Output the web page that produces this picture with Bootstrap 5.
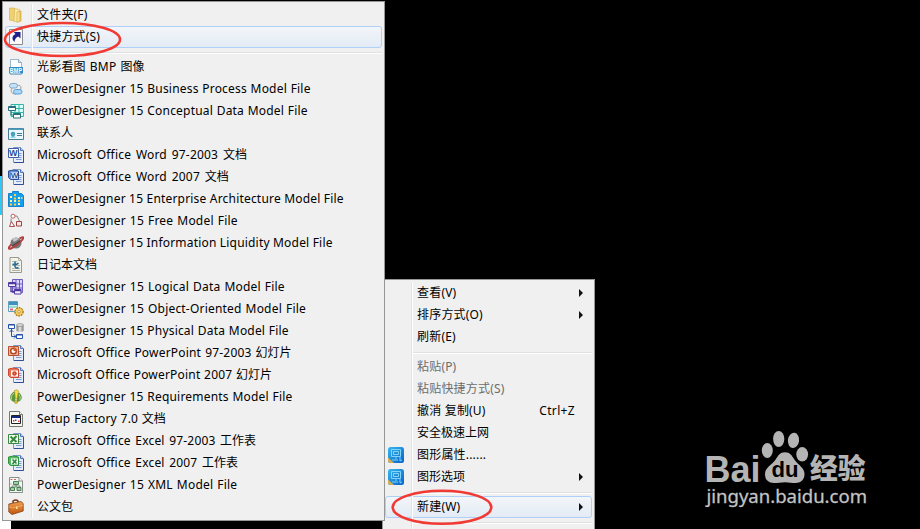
<!DOCTYPE html>
<html lang="zh-CN">
<head>
<meta charset="utf-8">
<meta name="viewport" content="width=device-width, initial-scale=1">
<title>新建 - 快捷方式</title>
<link href="https://cdn.jsdelivr.net/npm/bootstrap@5.3.0/dist/css/bootstrap.min.css" rel="stylesheet">
<style>
body{background:#000;font-family:"Noto Sans","Noto Sans CJK SC",sans-serif;font-size:12px;line-height:22px;color:#000}
.desk{width:920px;height:529px}
.edge{left:0;top:176px;width:11px;height:353px;background:linear-gradient(#2cc8fa 39px,#fff 39px)}
.ctx{background:#f0f0f0;border:1px solid #979797;padding:2px}
.ctx-new{left:2px;top:1px;width:383px;height:520px;z-index:2}
.ctx-main{left:382px;top:279px;width:213px;height:262px;z-index:1}
.ctx::before{content:"";position:absolute;left:28px;top:2px;bottom:2px;width:2px;background:linear-gradient(90deg,#e2e3e3 50%,#fff 50%)}
.entry{height:22px;padding-left:3px;border:1px solid transparent;border-radius:3px;line-height:20px;letter-spacing:.19px}
.entry svg{width:16px;height:16px;flex:none;margin-left:-1px}
.entry .ico{width:28px}
.entry .cjk{letter-spacing:0}
.ws-a{word-spacing:.4px}
.ws-b{word-spacing:.75px}
.ws-c{word-spacing:1.2px}
.ws-d{word-spacing:1.5px}
.entry.hot{border-color:#aecff7;background:linear-gradient(rgba(243,246,251,.85),rgba(225,234,246,.85))}
.entry.off{color:#6d6d6d}
.rule{height:8px;padding:4px 0 2px 28px}
.rule::before{content:"";display:block;height:2px;background:linear-gradient(#e0e0e0 50%,#fff 50%)}
.tri{width:0;height:0;border:4px solid transparent;border-left-color:#111;border-right:0;margin-right:8px}
.keys{margin-right:16px;letter-spacing:.35px}
.rings{left:0;top:0;z-index:3}
.brand{left:700px;top:425px}
</style>
</head>
<body>
<svg width="0" height="0" class="position-absolute">
<defs>
<linearGradient id="gFold" x2="1"><stop stop-color="#fff0a8"/><stop offset="1" stop-color="#e2b84c"/></linearGradient>
<linearGradient id="gBag" y2="1" x2="0"><stop stop-color="#f0a050"/><stop offset="1" stop-color="#c0560f"/></linearGradient>
<linearGradient id="gApp" x2="1" y2="1"><stop stop-color="#38b8f0"/><stop offset="1" stop-color="#0860c8"/></linearGradient>
<linearGradient id="gDb" x2="1"><stop stop-color="#777"/><stop offset=".5" stop-color="#e8e8e8"/><stop offset="1" stop-color="#777"/></linearGradient>
<symbol id="folder" viewBox="0 0 16 16"><path d="M1.500 1h5v13l-5-1z" fill="#f0d070" stroke="#d0ab48" stroke-width=".6"/><path d="M6.500 1.500l5 1v12H6z" fill="#fbe7a0" stroke="#d5b453" stroke-width=".6"/><path d="M9 5l4-1v10l-4 1.500z" fill="url(#gFold)" stroke="#cfa33e" stroke-width=".6"/></symbol>
<symbol id="link" viewBox="0 0 16 16"><path d="M1.500.5h13v15h-13z" fill="#fafafa" stroke="#8b8b8b"/><path d="M12.500 3v6.500L10.300 7.500C8 8.300 6.800 10 6.500 13 3.400 10 4 6.500 7.500 5L5.700 3z" fill="#20208c"/></symbol>
<symbol id="bmp" viewBox="0 0 16 16"><path d="M2.500.5h8l3 3v12h-11z" fill="#fff" stroke="#9bb7cc"/><path d="M10.500.5v3h3" fill="#cfe3f2" stroke="#6a9dc0" stroke-width=".8"/><path d="M1 8h14v6.500H1z" fill="#2f8cc6"/><text x="1.700" y="13.500" font-size="6.500" font-weight="700" fill="#fff" font-family="Liberation Sans,sans-serif" textLength="12.500" lengthAdjust="spacingAndGlyphs">BMP</text></symbol>
<symbol id="bpm" viewBox="0 0 16 16"><path d="M9 4.500c5-1 5 4 2 5M4 7c-2 4 0 6 4 6" fill="none" stroke="#999"/><rect x="1.500" y="2.500" width="8" height="4.500" rx="2.200" fill="#c2e3fb" stroke="#84a7c4"/><rect x="5.500" y="8.500" width="8.500" height="4.500" rx="2.200" fill="#a9d6f8" stroke="#5b9fd8"/></symbol>
<symbol id="cdm" viewBox="0 0 16 16"><path d="M3 1.500h12.500v12H3zM7 1.500v12M11 1.500v12M3 5.500h12M3 9.500h12" fill="#d6fff9" stroke="#36b5a8"/><path d="M.5 3.500h7v4h-7zM5.500 10.500h7v4.500h-7z" fill="#fff" stroke="#2c7079"/><path d="M3 8v4h3M1 4.500h6M6 11.500h6" fill="none" stroke="#2c7079"/></symbol>
<symbol id="contact" viewBox="0 0 16 16"><path d="M.5 3.500h15v11H.500z" fill="#e9f8ff" stroke="#467c9c"/><path d="M1 3.500h14v1.500H1z" fill="#4e9bc0"/><circle cx="5" cy="9" r="2.300" fill="#47a0b8"/><path d="M2 12.500q3-3 6 0z" fill="#4aafd2"/><path d="M9 8.500h5M9 10.500h5" stroke="#447b98"/></symbol>
<symbol id="page" viewBox="0 0 16 16"><path d="M5.500.5h7l3 3v12h-10z" fill="#e5edfb" stroke="#7b96c8"/><path d="M12.500.5v3h3" fill="#b8cbec" stroke="#5474b4"/><path d="M8 6.500h5.500M8 8.500h5.500M8 10.500h5.500M8 12.500h5.500" stroke="#7f9bd0"/><path d="M15.500 4v11.500H6" fill="none" stroke="#314f92"/></symbol>
<symbol id="word" viewBox="0 0 16 16"><use href="#page"/><path d="M.5 1.500h10v9H.500z" fill="#fff" stroke="#3c5fa5"/><text x="1" y="9.300" font-size="9" font-weight="700" fill="#2a4e9a" font-family="Liberation Sans,sans-serif">W</text></symbol>
<symbol id="word7" viewBox="0 0 16 16"><use href="#page"/><path d="M.5 2q5-2 10 0v8.500H2.500l-2-2z" fill="#648fdd" stroke="#2c4e94"/><path d="M3 3.500h7v6H3z" fill="#fff"/><text x="2.800" y="9.300" font-size="8" font-weight="700" fill="#2a4e9a" font-family="Liberation Sans,sans-serif">W</text></symbol>
<symbol id="eam" viewBox="0 0 16 16"><path d="M.5 2.500h4V.5h6v2h3l2 2v11H.500z" fill="#149ff0" stroke="#1680cf"/><path d="M2 5h2v2H2zm0 4h2v2H2zm4 0h2v2H6zm4-3h2v2h-2zm0 6h2v2h-2z" fill="#fff0a0"/><path d="M6 3h2v2H6zm0 3.500h2v2H6zM2 12.500h2v2H2zm4 0h2v2H6zM10 9h2v2h-2zm3-3h1.500v2H13z" fill="#ffcf3d"/></symbol>
<symbol id="free" viewBox="0 0 16 16"><path d="M3 5.500V10M7 3h2l2.500 5M3 12l4 1" fill="none" stroke="#888"/><circle cx="5" cy="3.200" r="2" fill="#fff" stroke="#b86060"/><path d="M3.500 8.500l3 5h-5z" fill="#fff" stroke="#b05050"/><path d="M8.500 8.500h5v4.500h-5z" fill="#ffe9e6" stroke="#a54040"/></symbol>
<symbol id="ilm" viewBox="0 0 16 16"><circle cx="8" cy="8" r="5.500" fill="#777"/><path d="M4 4q3-3 7 0l-5 3z" fill="#c4c4c4"/><path d="M11.500 3.500C17 .8 16.500 3 11 8S0 15.500.8 12.500L3.500 9" fill="none" stroke="#b04242" stroke-width="2"/><path d="M4 11l8-5" stroke="#3a3a3a"/></symbol>
<symbol id="journal" viewBox="0 0 16 16"><path d="M2 .5h8.500l3 3v12H2z" fill="#f4f3e8" stroke="#999b90"/><path d="M10.500.5v3h3M4 4.500h5M4 13.500h8M4 8.500h8M4 11.500h8" fill="none" stroke="#9ea298" stroke-width=".8"/><path d="M7 4.500v5q1 2.500 3.500 1M4.500 7q3 1.500 6-.8" fill="none" stroke="#286d94" stroke-width="1.600"/></symbol>
<symbol id="ldm" viewBox="0 0 16 16"><path d="M4.500.5h10v13h-10zM8 .5v13M11.500.5v13M4 5h11M4 9h11" fill="#dcd5ff" stroke="#6f5dbe"/><path d="M.5 3.500h7v4h-7zM6.500 10.500h6.500v4.500H6.500z" fill="#f3f0ff" stroke="#4f399e"/><path d="M1 4.500h6M7 11.500h6M3 8v4.500h3" fill="none" stroke="#4f399e" stroke-width="1.300"/></symbol>
<symbol id="oom" viewBox="0 0 16 16"><path d="M.5.5h9v10h-9z" fill="#fff" stroke="#5fa1b5"/><path d="M1 1h8.500v3H1z" fill="#3e91c5"/><path d="M1 4.500h8.500v2.500H1z" fill="#99dcd2"/><path d="M2 8.500h3" stroke="#e25c7a" stroke-width="2"/><circle cx="11" cy="10.800" r="4" fill="#eebc43" stroke="#a97618" stroke-width="1.500" stroke-dasharray="1.600 1"/><circle cx="11" cy="10.800" r="3.300" fill="#f5ce63"/><circle cx="11" cy="10.800" r="1.300" fill="#fff" stroke="#ad7c1c" stroke-width=".7"/></symbol>
<symbol id="pdm" viewBox="0 0 16 16"><path d="M.5 1.500h6v4h-6zM8.500 11.500h6v4h-6z" fill="#fff" stroke="#2453ac"/><path d="M1 2h5.500M9 12h5.500" stroke="#2453ac"/><path d="M3.500 6v7.500H8M1.500 9l2-2 2 2M6 11.500l2 2-2 2" fill="none" stroke="#2453ac"/><path d="M8.500 2v6q3.500 2 7 0V2z" fill="url(#gDb)"/><ellipse cx="12" cy="2" rx="3.500" ry="1.400" fill="#ddd" stroke="#777" stroke-width=".6"/></symbol>
<symbol id="ppt" viewBox="0 0 16 16"><use href="#page"/><path d="M.5 1.500h10v9H.500z" fill="#f0b59c" stroke="#b7502d"/><circle cx="5.500" cy="6" r="2.800" fill="#fff" stroke="#b44720" stroke-width="1.500"/><path d="M5.500 6V2.500A3.500 3.500 0 0 1 9 6z" fill="#d05a28"/></symbol>
<symbol id="ppt7" viewBox="0 0 16 16"><use href="#page"/><path d="M.5 2q5-2 10 0v8.500H2.500l-2-2z" fill="#e57355" stroke="#cc4a34"/><path d="M3 3.500h7v6H3z" fill="#fff"/><circle cx="6.500" cy="6.500" r="1.600" fill="#e9785c" stroke="#cf3c20" stroke-width="1.400"/></symbol>
<symbol id="req" viewBox="0 0 16 16"><path d="M7 13C1 12 .5 6 6 2.500l2 1zM9 13c6-1 6-6 2-9.500L9 5z" fill="#5b963b"/><path d="M3 11q0-5 3-7M12 11q1-3-1-6" fill="none" stroke="#b3d692"/><path d="M6.500 1.500q2.500-1.500 4 .5L9 10H7.500z" fill="#ffe044" stroke="#9c8d1d" stroke-width=".6"/><circle cx="8" cy="13" r="1.500" fill="#e7c42d" stroke="#8a801a" stroke-width=".5"/></symbol>
<symbol id="setup" viewBox="0 0 16 16"><path d="M1.500.5h10l3 3v12h-13z" fill="#f7f6ed" stroke="#777"/><path d="M11.500.5v3h3" fill="#fff" stroke="#777"/><path d="M3.500 4.500h9v8h-9z" fill="#fff" stroke="#222"/><path d="M4 5h8v2H4z" fill="#182684"/><path d="M5 9h1.500v1.500H5z" fill="#d33"/><path d="M7 8.500h1.500V10H7z" fill="#44c"/><path d="M10 9.500h1.500V11H10z" fill="#d33"/></symbol>
<symbol id="xls" viewBox="0 0 16 16"><use href="#page"/><path d="M.5 1.500h10v9H.500z" fill="#f2fff0" stroke="#3b8940"/><path d="M2.500 3.500l6 5.500M8.500 3l-6 6.500" stroke="#35883b" stroke-width="2"/></symbol>
<symbol id="xls7" viewBox="0 0 16 16"><use href="#page"/><path d="M.5 2q5-2 10 0v8.500H2.500l-2-2z" fill="#55bd62" stroke="#2e9140"/><path d="M3 3.500h7v6H3z" fill="#fff"/><path d="M4.500 4.500l4 4M8.500 4.500l-4 4.500" stroke="#2d873a" stroke-width="1.700"/></symbol>
<symbol id="xml" viewBox="0 0 16 16"><path d="M1.500.5h9.500l3.500 3.500v11.500h-13z" fill="#f3f8f3" stroke="#888e8c"/><path d="M11 .5V4h3.500" fill="#fff" stroke="#888"/><path d="M8 7v4M4 11V9h8v2" fill="none" stroke="#718a78"/><path d="M5.500 4.500h5v3h-5zM2.500 10.500h4v3h-4zM9 10.500h4v3H9z" fill="#a1d0a7" stroke="#4d8055"/><path d="M2.500 2.500h2M6 2.500h2M2.500 7h1" stroke="#c56565"/></symbol>
<symbol id="bag" viewBox="0 0 16 16"><path d="M5 4V2q3-2 5 0v2" fill="none" stroke="#713610" stroke-width="1.500"/><path d="M.8 5L13 2.500l2.200 2V12L4 15.500.8 13z" fill="url(#gBag)" stroke="#854010" stroke-width=".8"/><path d="M1 7.500l3.500 1.500L15 6.500" fill="none" stroke="#f5b468" stroke-width=".8"/><path d="M8 7.500h1.500v2.500H8z" fill="#ffe095"/></symbol>
<symbol id="gfx" viewBox="0 0 16 16"><rect width="16" height="16" rx="2.500" fill="url(#gApp)"/><path d="M3.500 2.500h9v7h-9zM5.500 4.500h5v3h-5zM8 10v2M4 13h6" fill="none" stroke="#8adcfb" stroke-width=".9"/><path d="M0 10.500L6 16H2.500Q0 16 0 13.500z" fill="#d9b04e"/><path d="M12 10v4l2-1" fill="none" stroke="#7bd8ff"/></symbol>
</defs>
</svg>

<main class="desk position-relative overflow-hidden">
<div class="edge position-absolute"></div>

<section class="ctx ctx-new position-absolute d-flex flex-column">
<div class="entry d-flex align-items-center"><span class="ico d-flex"><svg><use href="#folder"/></svg></span><span>文件夹(F)</span></div>
<div class="entry hot d-flex align-items-center"><span class="ico d-flex"><svg><use href="#link"/></svg></span><span>快捷方式(S)</span></div>
<div class="rule"></div>
<div class="entry d-flex align-items-center"><span class="ico d-flex"><svg><use href="#bmp"/></svg></span><span class="ws-b">光影看图 BMP 图像</span></div>
<div class="entry d-flex align-items-center"><span class="ico d-flex"><svg><use href="#bpm"/></svg></span><span class="ws-a">PowerDesigner 15 Business Process Model File</span></div>
<div class="entry d-flex align-items-center"><span class="ico d-flex"><svg><use href="#cdm"/></svg></span><span class="ws-a">PowerDesigner 15 Conceptual Data Model File</span></div>
<div class="entry d-flex align-items-center"><span class="ico d-flex"><svg><use href="#contact"/></svg></span><span class="cjk">联系人</span></div>
<div class="entry d-flex align-items-center"><span class="ico d-flex"><svg><use href="#word"/></svg></span><span class="ws-d">Microsoft Office Word 97-2003 <span class="cjk">文档</span></span></div>
<div class="entry d-flex align-items-center"><span class="ico d-flex"><svg><use href="#word7"/></svg></span><span class="ws-d">Microsoft Office Word 2007 <span class="cjk">文档</span></span></div>
<div class="entry d-flex align-items-center"><span class="ico d-flex"><svg><use href="#eam"/></svg></span><span>PowerDesigner 15 Enterprise Architecture Model File</span></div>
<div class="entry d-flex align-items-center"><span class="ico d-flex"><svg><use href="#free"/></svg></span><span class="ws-b">PowerDesigner 15 Free Model File</span></div>
<div class="entry d-flex align-items-center"><span class="ico d-flex"><svg><use href="#ilm"/></svg></span><span>PowerDesigner 15 Information Liquidity Model File</span></div>
<div class="entry d-flex align-items-center"><span class="ico d-flex"><svg><use href="#journal"/></svg></span><span class="cjk">日记本文档</span></div>
<div class="entry d-flex align-items-center"><span class="ico d-flex"><svg><use href="#ldm"/></svg></span><span class="ws-b">PowerDesigner 15 Logical Data Model File</span></div>
<div class="entry d-flex align-items-center"><span class="ico d-flex"><svg><use href="#oom"/></svg></span><span class="ws-b">PowerDesigner 15 Object-Oriented Model File</span></div>
<div class="entry d-flex align-items-center"><span class="ico d-flex"><svg><use href="#pdm"/></svg></span><span class="ws-a">PowerDesigner 15 Physical Data Model File</span></div>
<div class="entry d-flex align-items-center"><span class="ico d-flex"><svg><use href="#ppt"/></svg></span><span class="ws-b">Microsoft Office PowerPoint 97-2003 <span class="cjk">幻灯片</span></span></div>
<div class="entry d-flex align-items-center"><span class="ico d-flex"><svg><use href="#ppt7"/></svg></span><span class="ws-a">Microsoft Office PowerPoint 2007 <span class="cjk">幻灯片</span></span></div>
<div class="entry d-flex align-items-center"><span class="ico d-flex"><svg><use href="#req"/></svg></span><span class="ws-a">PowerDesigner 15 Requirements Model File</span></div>
<div class="entry d-flex align-items-center"><span class="ico d-flex"><svg><use href="#setup"/></svg></span><span class="ws-a">Setup Factory 7.0 <span class="cjk">文档</span></span></div>
<div class="entry d-flex align-items-center"><span class="ico d-flex"><svg><use href="#xls"/></svg></span><span class="ws-c">Microsoft Office Excel 97-2003 <span class="cjk">工作表</span></span></div>
<div class="entry d-flex align-items-center"><span class="ico d-flex"><svg><use href="#xls7"/></svg></span><span class="ws-c">Microsoft Office Excel 2007 <span class="cjk">工作表</span></span></div>
<div class="entry d-flex align-items-center"><span class="ico d-flex"><svg><use href="#xml"/></svg></span><span class="ws-b">PowerDesigner 15 XML Model File</span></div>
<div class="entry d-flex align-items-center"><span class="ico d-flex"><svg><use href="#bag"/></svg></span><span class="cjk">公文包</span></div>
</section>

<section class="ctx ctx-main position-absolute d-flex flex-column">
<div class="entry d-flex align-items-center"><span class="ico"></span><span>查看(V)</span><i class="tri ms-auto"></i></div>
<div class="entry d-flex align-items-center"><span class="ico"></span><span>排序方式(O)</span><i class="tri ms-auto"></i></div>
<div class="entry d-flex align-items-center"><span class="ico"></span><span>刷新(E)</span></div>
<div class="rule"></div>
<div class="entry off d-flex align-items-center"><span class="ico"></span><span>粘贴(P)</span></div>
<div class="entry off d-flex align-items-center"><span class="ico"></span><span>粘贴快捷方式(S)</span></div>
<div class="entry d-flex align-items-center"><span class="ico"></span><span>撤消 复制(U)</span><span class="keys ms-auto">Ctrl+Z</span></div>
<div class="entry d-flex align-items-center"><span class="ico"></span><span class="cjk">安全极速上网</span></div>
<div class="entry d-flex align-items-center"><span class="ico d-flex"><svg><use href="#gfx"/></svg></span><span>图形属性......</span></div>
<div class="entry d-flex align-items-center"><span class="ico d-flex"><svg><use href="#gfx"/></svg></span><span class="cjk">图形选项</span><i class="tri ms-auto"></i></div>
<div class="rule"></div>
<div class="entry hot d-flex align-items-center"><span class="ico"></span><span>新建(W)</span><i class="tri ms-auto"></i></div>
<div class="rule"></div>
</section>

<svg class="rings position-absolute" width="920" height="529" fill="none" stroke="#f23a35" stroke-width="2.600">
<ellipse cx="62.500" cy="39.500" rx="57.500" ry="16.500"/>
<ellipse cx="442" cy="507.300" rx="49.300" ry="16.500"/>
</svg>

<svg class="brand position-absolute" width="180" height="90" fill="#b4b4b4">
<text x="4.500" y="56.500" font-family="Liberation Sans,sans-serif" font-weight="700" font-size="37" textLength="56" lengthAdjust="spacingAndGlyphs">Bai</text>
<ellipse cx="67.300" cy="25.500" rx="5.500" ry="7.500"/>
<ellipse cx="78.700" cy="14" rx="5.600" ry="8"/>
<ellipse cx="93.500" cy="15.400" rx="5.600" ry="7.600" transform="rotate(8 93.500 15.400)"/>
<ellipse cx="102.200" cy="29.300" rx="5.900" ry="7.300"/>
<path d="M85 27.300c-5 0-7 3.500-9.500 7.500-3.500 5-10.500 7.500-10.500 14.500 0 6 4 8.700 9 8.700 4 0 7-.8 11-.8s7 .8 10.500.8c5 0 9-3 9-8.700 0-6.500-6-9-10-14.500-2.500-4-4.500-7.500-9.500-7.500z"/>
<text x="71.500" y="52" fill="#000" font-family="Liberation Sans,sans-serif" font-weight="700" font-size="22" textLength="27" lengthAdjust="spacingAndGlyphs">du</text>
<text x="110" y="53.500" font-family="Noto Sans CJK SC,sans-serif" font-weight="900" font-size="28" textLength="55.500" lengthAdjust="spacingAndGlyphs">经验</text>
<text x="6.500" y="78" font-family="Noto Sans,sans-serif" font-size="18" fill="#c3c3c3" stroke="#c3c3c3" stroke-width=".3" textLength="160.500" lengthAdjust="spacingAndGlyphs">jingyan.baidu.com</text>
</svg>
</main>
<script src="https://cdn.jsdelivr.net/npm/bootstrap@5.3.0/dist/js/bootstrap.bundle.min.js"></script>
</body>
</html>
